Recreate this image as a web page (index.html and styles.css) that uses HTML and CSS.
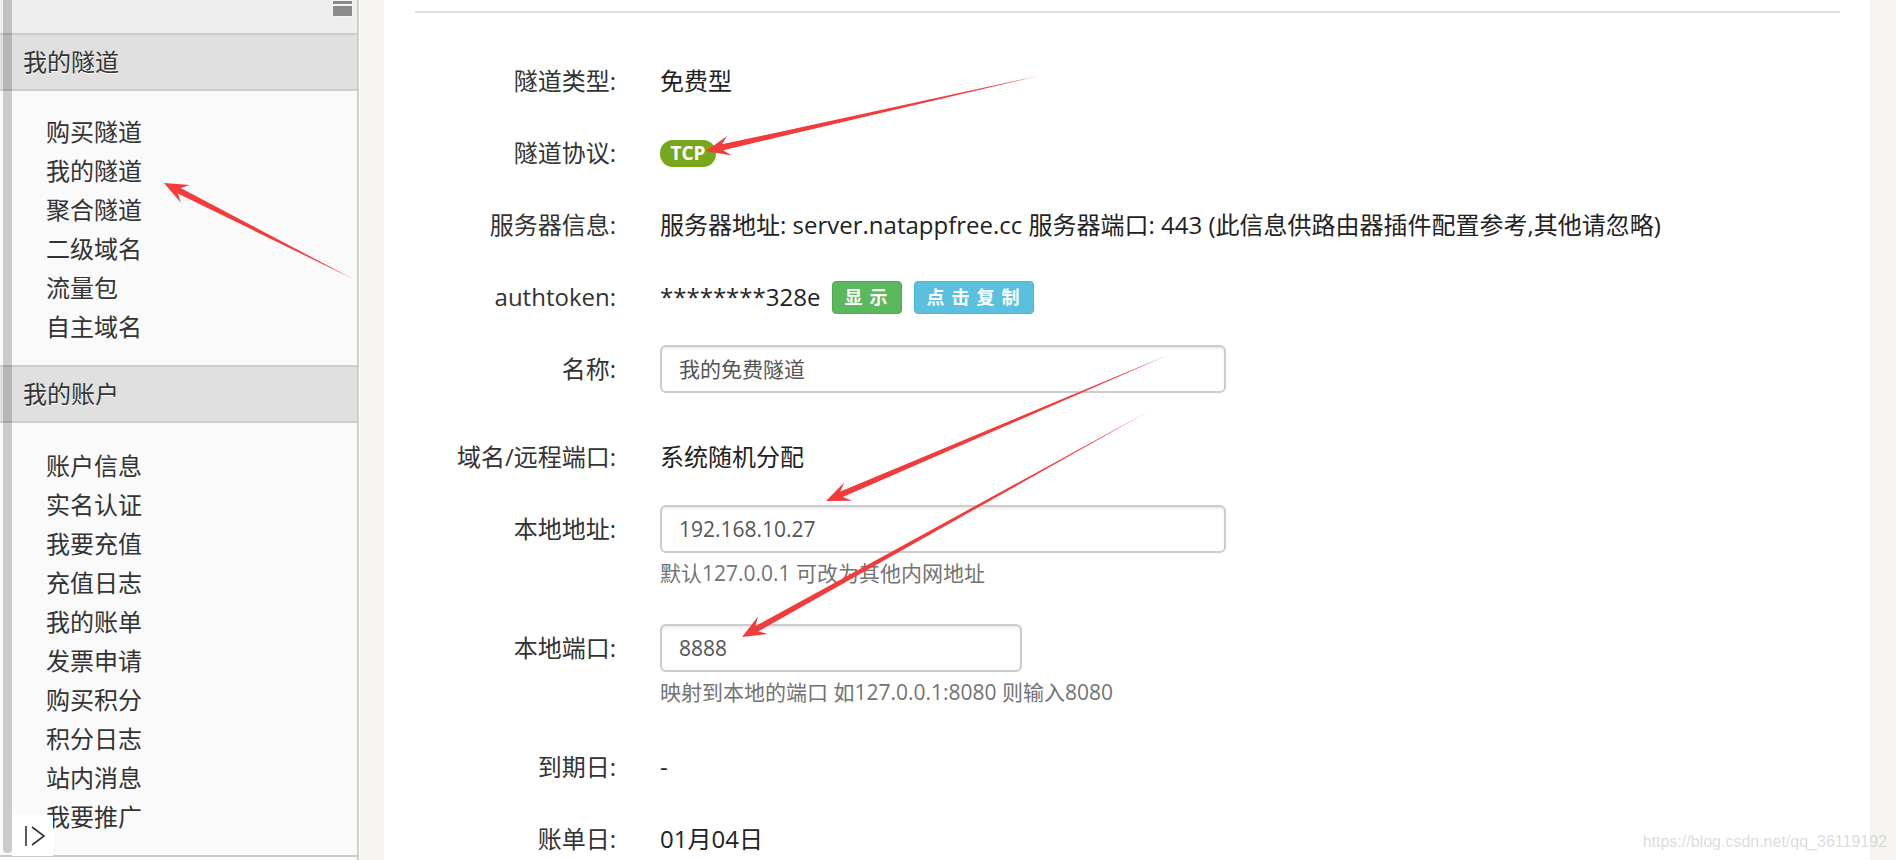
FILE: index.html
```html
<!DOCTYPE html>
<html lang="zh-CN">
<head>
<meta charset="utf-8">
<title>我的隧道</title>
<link rel="stylesheet" href="styles.css">
</head>
<body>
<div class="page">
  <aside class="sidebar">
    <div class="sb-top">
      <svg class="sb-menu" width="21" height="17" viewBox="0 0 21 17">
        <rect x="0" y="0" width="21" height="17" fill="#f4f4f4"/>
        <rect x="1" y="1" width="19" height="3" fill="#8a8a8a"/>
        <rect x="1" y="6" width="19" height="10" fill="#8a8a8a"/>
      </svg>
    </div>
    <div class="sb-head">我的隧道</div>
    <ul class="sb-list">
      <li>购买隧道</li>
      <li>我的隧道</li>
      <li>聚合隧道</li>
      <li>二级域名</li>
      <li>流量包</li>
      <li>自主域名</li>
    </ul>
    <div class="sb-head">我的账户</div>
    <ul class="sb-list sb-list-2">
      <li>账户信息</li>
      <li>实名认证</li>
      <li>我要充值</li>
      <li>充值日志</li>
      <li>我的账单</li>
      <li>发票申请</li>
      <li>购买积分</li>
      <li>积分日志</li>
      <li>站内消息</li>
      <li>我要推广</li>
    </ul>
    <div class="sb-strip"></div>
    <div class="sb-toggle">
      <svg width="41" height="41" viewBox="0 0 41 41">
        <line x1="14" y1="11" x2="14" y2="31" stroke="#333" stroke-width="1.6"/>
        <polyline points="20,12 32,21 20,30" fill="none" stroke="#333" stroke-width="1.6"/>
      </svg>
    </div>
  </aside>

  <main class="panel">
    <div class="rule"></div>
    <div class="form">
      <div class="group">
        <div class="label">隧道类型:</div>
        <div class="value">免费型</div>
      </div>
      <div class="group">
        <div class="label">隧道协议:</div>
        <div class="value"><span class="badge">TCP</span></div>
      </div>
      <div class="group">
        <div class="label">服务器信息:</div>
        <div class="value">服务器地址: server.natappfree.cc 服务器端口: 443 (此信息供路由器插件配置参考,其他请忽略)</div>
      </div>
      <div class="group">
        <div class="label">authtoken:</div>
        <div class="value">
          <span class="token">********328e</span>
          <span class="btn btn-success">显示</span>
          <span class="btn btn-info">点击复制</span>
        </div>
      </div>
      <div class="group group-tall">
        <div class="label">名称:</div>
        <div class="value"><div class="input input-wide">我的免费隧道</div></div>
      </div>
      <div class="group">
        <div class="label">域名/远程端口:</div>
        <div class="value">系统随机分配</div>
      </div>
      <div class="group">
        <div class="label">本地地址:</div>
        <div class="field">
          <div class="input input-wide">192.168.10.27</div>
          <div class="help">默认127.0.0.1 可改为其他内网地址</div>
        </div>
      </div>
      <div class="group">
        <div class="label">本地端口:</div>
        <div class="field">
          <div class="input input-narrow">8888</div>
          <div class="help">映射到本地的端口 如127.0.0.1:8080 则输入8080</div>
        </div>
      </div>
      <div class="group">
        <div class="label">到期日:</div>
        <div class="value">-</div>
      </div>
      <div class="group">
        <div class="label">账单日:</div>
        <div class="value">01月04日</div>
      </div>
    </div>
  </main>

  <svg class="arrows" width="1896" height="860" viewBox="0 0 1896 860">
    <polygon points="1038,76 721.9,144.3 727.2,136 706,151 731.6,155.5 723.3,150.2"/>
    <polygon points="353,279 180.6,188 189.9,185 164,183 180.9,202.8 177.8,193.4"/>
    <polygon points="1168,355 840.4,491.5 844.2,482.4 826,501 852,500.8 842.8,497.1"/>
    <polygon points="1149,411 755.4,626.1 758.1,616.6 742,637 767.9,634 758.4,631.3"/>
  </svg>

  <div class="watermark">https://blog.csdn.net/qq_36119192</div>
</div>
</body>
</html>
```

FILE: styles.css
```css
html, body {
  margin: 0;
  padding: 0;
}
body {
  background: #f6f5f1;
  font-family: "Open Sans", "Noto Sans CJK SC", sans-serif;
  color: #333;
}
.page {
  position: relative;
  display: flex;
  width: 1896px;
  height: 860px;
  overflow: hidden;
}

/* sidebar */
.sidebar {
  position: relative;
  width: 357px;
  flex: none;
  background: #fafafa;
  border-right: 2px solid #cfcfcf;
  box-shadow: 1px 0 0 #fff;
  font-size: 24px;
  color: #333;
}
.sb-top {
  height: 33px;
  background: #eeeeee;
  border-bottom: 2px solid #cccccc;
  display: flex;
  justify-content: flex-end;
  align-items: flex-start;
  padding-right: 4px;
}
.sb-menu {
  display: block;
}
.sb-head {
  height: 54px;
  line-height: 54px;
  padding-left: 23px;
  background: #e0e0e0;
  border-bottom: 2px solid #cccccc;
  text-shadow: 0 1px 0 #fff;
}
.sb-list {
  list-style: none;
  margin: 0;
  padding: 21px 0 19px 46px;
  border-bottom: 2px solid #cccccc;
  background: #fafafa;
}
.sb-list-2 {
  padding-top: 23px;
}
.sb-list li {
  line-height: 39px;
  height: 39px;
}
.sb-strip {
  position: absolute;
  left: 3px;
  top: 0;
  width: 9px;
  height: 853px;
  border-radius: 0 0 4px 4px;
  background: rgba(0, 0, 0, 0.19);
}
.sb-toggle {
  position: absolute;
  left: 12px;
  top: 815px;
  width: 41px;
  height: 41px;
  background: #ffffff;
}
.sb-toggle svg {
  display: block;
}

/* main panel */
.panel {
  flex: none;
  width: 1486px;
  margin-left: 25px;
  background: #ffffff;
  padding: 0 30px 0 31px;
  box-sizing: border-box;
}
.rule {
  height: 2px;
  background: #e0e0e0;
  margin-top: 11px;
}
.form {
  margin-top: 43px;
}
.group {
  display: grid;
  grid-template-columns: 201px 1fr;
  column-gap: 44px;
  align-items: start;
  margin-bottom: 22px;
  font-size: 24px;
}
.group-tall {
  margin-bottom: 38px;
}
.label {
  text-align: right;
  line-height: 50px;
  color: #333;
  white-space: nowrap;
}
.value {
  min-height: 50px;
  line-height: 50px;
  display: flex;
  align-items: center;
  white-space: nowrap;
  color: #222;
}
.field {
  display: flex;
  flex-direction: column;
}
.badge {
  display: inline-block;
  width: 56px;
  height: 27px;
  line-height: 27px;
  border-radius: 13px;
  background: #76a71c;
  color: #fff;
  font-weight: 700;
  font-size: 19px;
  text-align: center;
}
.token {
  margin-right: 12px;
}
.btn {
  display: inline-block;
  height: 31px;
  line-height: 31px;
  padding: 0 7px 0 11px;
  border-radius: 4px;
  color: #fff;
  font-size: 18px;
  font-weight: 700;
  letter-spacing: 7px;
  margin-right: 12px;
  border: 1px solid transparent;
}
.btn-success {
  background: #5cb85c;
  border-color: #4cae4c;
}
.btn-info {
  background: #5bc0de;
  border-color: #46b8da;
}
.input {
  height: 48px;
  margin: 1px 0;
  line-height: 44px;
  box-sizing: border-box;
  border: 2px solid #cccccc;
  border-radius: 6px;
  box-shadow: inset 0 2px 2px rgba(0, 0, 0, 0.075);
  padding: 0 17px;
  font-size: 21px;
  color: #555;
  background: #fff;
}
.input-wide {
  width: 566px;
}
.input-narrow {
  width: 362px;
}
.help {
  margin: 4px 0 13px;
  line-height: 30px;
  font-size: 21px;
  color: #737373;
  white-space: nowrap;
}

/* overlays */
.arrows {
  position: absolute;
  left: 0;
  top: 0;
  pointer-events: none;
}
.arrows polygon {
  fill: #f23b3b;
}
.watermark {
  position: absolute;
  right: 9px;
  top: 832px;
  font-family: "Liberation Sans", Arial, sans-serif;
  font-size: 16px;
  line-height: 20px;
  color: rgba(190, 190, 190, 0.55);
}
```
